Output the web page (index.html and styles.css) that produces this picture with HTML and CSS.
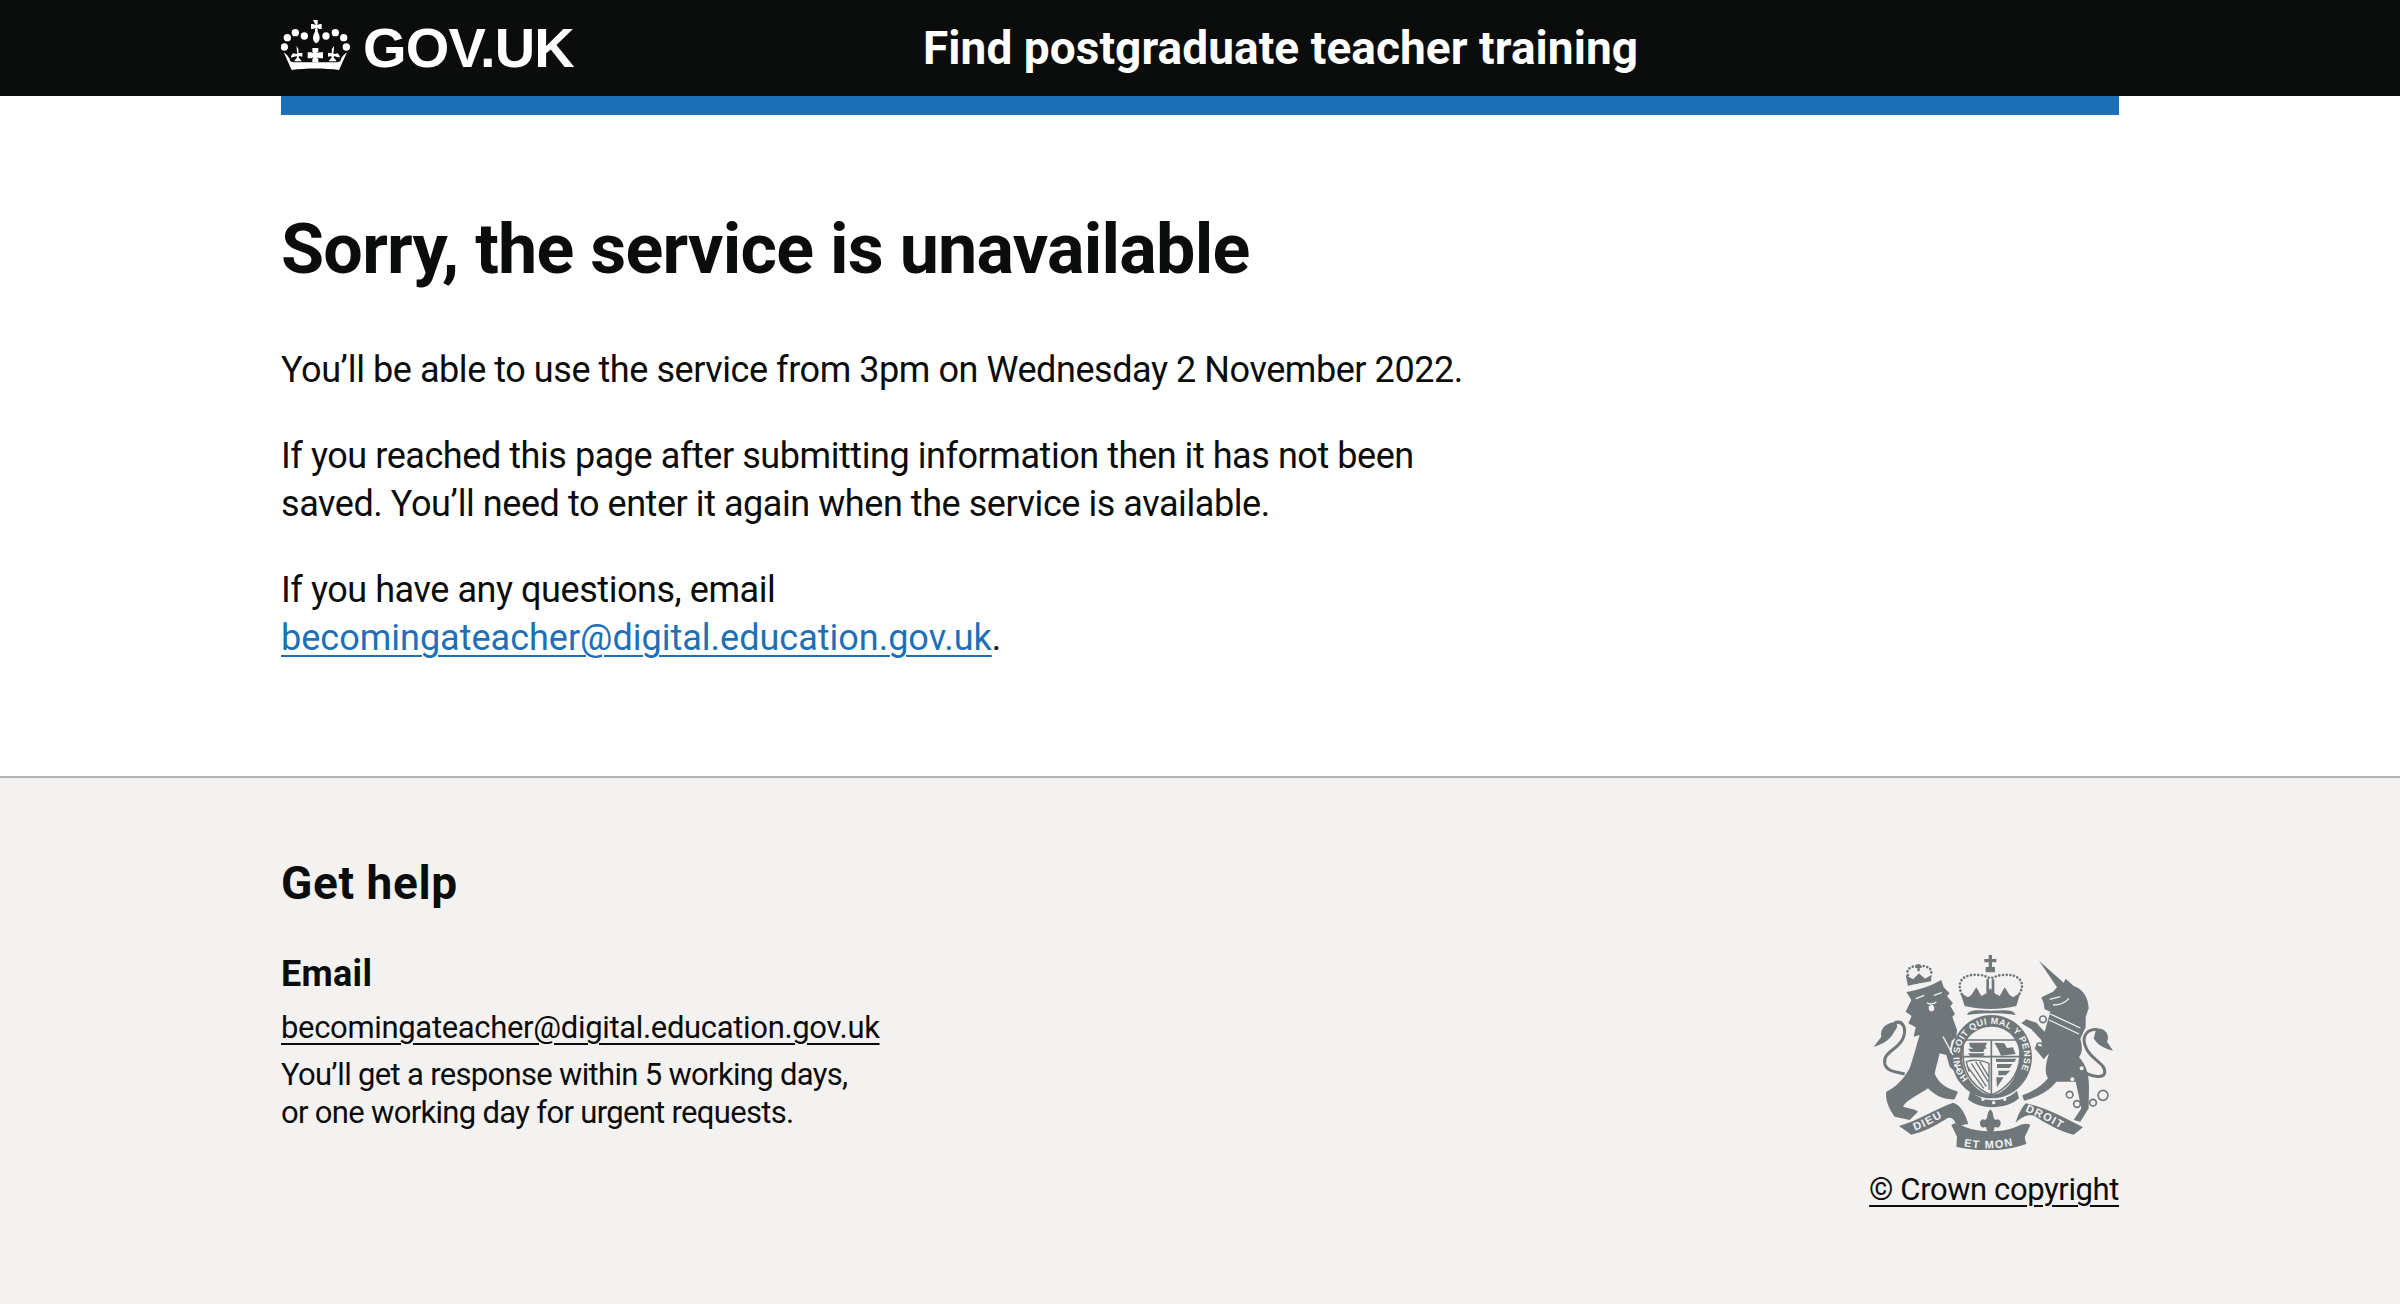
FILE: index.html
```html
<!DOCTYPE html>
<html lang="en">
<head>
<meta charset="utf-8">
<title>Sorry, the service is unavailable</title>
<link rel="stylesheet" href="styles.css">
</head>
<body>
<header class="header">
  <div class="wrap header-row">
    <a class="logo" href="#">
      <svg class="crown" viewBox="18 15 207 150" aria-hidden="true">
        <g fill="#fff">
          <circle cx="28" cy="96" r="11"/><circle cx="37" cy="68" r="11"/><circle cx="61" cy="53" r="11"/><circle cx="88" cy="63" r="11"/>
          <circle cx="153" cy="63" r="11"/><circle cx="181" cy="53" r="11"/><circle cx="206" cy="68" r="11"/><circle cx="214" cy="96" r="11"/>
          <path d="M114 15h14v11l-3 4 10-3h5v15h-5l-10-3 3 4v7c9 15 8 28-4 35-12-7-13-20-4-35v-7l3-4-10 3h-5V27h5l10 3-3-4z"/>
          <path d="M65 93c5 7 7 12 5 18l2 4 10-2v12l-10-2-1 5c4 4 7 7 9 11H57c2-4 5-7 9-11l-1-5-11 4-3-1c-2 5-3 2-3-3l6-8 11 2 2-4c-2-6-2-13-2-20z"/>
          <path d="M177 93c0 7 0 14-2 20l2 4 11-2 6 8c0 5-1 8-3 3l-3 1-11-4-1 5c4 4 7 7 9 11h-24c2-4 5-7 9-11l-1-5-10 2v-12l10 2 2-4c-2-6 0-11 6-18z"/>
          <path d="M112 99h18v11l-4 5 8-3h10v18h-10l-8-3 4 5v10h-18v-10l4-5-8 3H98v-18h10l8 3-4-5z"/>
          <path d="M50 165 26 112l10 8 8 11 2 8 9 3h132l9-3 2-8 8-11 10-8-24 53c-40-6-102-6-142 0z"/>
        </g>
      </svg>
      <span class="logo-text">GOV.UK</span>
    </a>
    <a class="service" href="#">Find postgraduate teacher training</a>
  </div>
</header>
<div class="wrap"><div class="blue-bar"></div></div>
<main class="wrap main">
  <h1 class="title">Sorry, the service is unavailable</h1>
  <p class="body-text">You’ll be able to use the service from 3pm on Wednesday 2 November 2022.</p>
  <p class="body-text">If you reached this page after submitting information then it has not been<br>saved. You’ll need to enter it again when the service is available.</p>
  <p class="body-text">If you have any questions, email<br><a class="link" href="#">becomingateacher@digital.education.gov.uk</a>.</p>
</main>
<footer class="footer">
  <div class="wrap footer-row">
    <div class="help">
      <h2 class="help-title">Get help</h2>
      <h3 class="help-sub">Email</h3>
      <p class="help-line"><a class="foot-link" href="#">becomingateacher@digital.education.gov.uk</a></p>
      <p class="help-line help-note">You’ll get a response within 5 working days,<br>or one working day for urgent requests.</p>
    </div>
    <div class="copy">
      <svg class="arms" viewBox="100 45 720 585" aria-hidden="true">
        <defs>
          <path id="ring" d="M386 416A97 97 0 1 1 526 416"/>
          <path id="dieu" d="M226 572C265 558 300 535 350 510"/>
          <path id="etmon" d="M360 616C420 630 490 630 565 604"/>
          <path id="droit" d="M556 514C600 530 650 556 700 590"/>
        </defs>
        <g class="ink">
          <!-- lion -->
          <path d="M200 156C235 150 270 140 305 120L312 142 330 160 322 168 340 190 332 198 346 222 338 230 352 270 350 292 336 302 330 335 362 372 347 396 330 380 320 345 300 340 285 400C295 430 320 445 355 455L345 478C310 480 285 465 265 445C245 460 200 480 190 500C205 505 225 505 235 515L210 540 165 530C150 510 135 480 140 455C160 445 185 430 210 385C225 340 232 310 240 285L222 290 228 262 206 250 216 228 198 215 215 180Z"/>
          <path d="M168 246C135 248 120 270 125 290L102 320C125 315 150 300 160 282C165 270 180 262 168 246Z"/>
          <path class="line" stroke-width="9" d="M165 248C190 240 202 265 190 295C175 330 130 335 135 370C140 395 170 395 195 402"/>
          <path d="M205 138 198 105 220 118 238 100 256 116 276 104 274 124C255 128 225 132 205 138Z"/>
          <path class="dots" d="M205 105C195 85 225 75 238 78C255 75 285 85 272 105"/>
          <path d="M233 72h7v6h6v6h-6v10h-7V84h-6v-6h6z"/>
          <!-- unicorn -->
          <path d="M598 62 672 128 678 116 702 138C728 145 746 172 747 205L738 232 738 262 722 296C728 320 730 335 718 352C735 370 748 395 748 440L747 505 722 545 702 540 725 505 716 462 708 425 650 425C630 450 600 470 553 482L548 466C575 456 605 440 625 415C612 395 620 365 628 340L612 358 585 325 590 315 608 320 605 300 575 268 545 250 560 238 590 248 602 262 615 275 632 215 615 208 612 190 605 172 640 155 652 142Z"/>
          <path d="M770 266C795 262 812 285 802 305L820 332C800 328 775 318 762 295Z"/>
          <path class="line" stroke-width="9" d="M772 268C735 268 725 295 740 325C755 360 800 370 795 400C790 415 760 410 740 400"/>
          <circle class="ring-line" cx="610" cy="238" r="10"/>
          <circle class="ring-line" cx="600" cy="318" r="9"/>
          <circle class="ring-line" cx="690" cy="464" r="10"/>
          <circle class="ring-line" cx="712" cy="492" r="10"/>
          <circle class="ring-line" cx="760" cy="488" r="10"/>
          <circle class="ring-line" cx="790" cy="466" r="15"/>
          <!-- crest crown -->
          <path d="M447 45h10v12h13v10h-13v14h9v16h-28V81h9V67h-13V57h13zM440 118h8v40h-8zM456 118h8v40h-8z"/>
          <path class="dots" d="M372 172C345 130 365 100 420 105C435 105 440 112 452 115C465 112 475 105 490 105C540 100 565 130 532 172"/>
          <path d="M375 198 362 158 385 172 395 165 410 142 425 168 440 160 452 145 465 160 480 168 495 142 510 165 520 172 542 158 530 198C480 210 425 210 375 198Z"/>
          <path d="M382 225C390 205 420 212 455 212S520 205 528 225C490 218 425 218 382 225Z"/>
          <!-- garter -->
          <path fill-rule="evenodd" d="M456 225C525 225 577 282 577 350S525 475 456 475 335 418 335 350 387 225 456 225ZM456 260C408 260 367 298 367 350S408 460 456 465C504 460 540 402 540 350S504 260 456 260Z"/>
          <path d="M392 452C430 490 490 490 532 452L538 475C500 510 420 510 385 478Z"/>
          <!-- fleur -->
          <path d="M452 508C466 522 456 534 468 540C480 530 492 555 474 563C464 558 464 562 463 570L452 585 441 570C440 562 440 558 430 563C412 555 424 530 436 540C448 534 438 522 452 508Z"/>
          <!-- ribbons -->
          <path d="M178 558C240 540 290 505 340 488C365 495 378 525 386 552L350 558C345 535 332 528 318 538C285 558 250 578 215 584Z"/>
          <path d="M335 555C345 545 362 552 378 562C420 578 490 578 530 560 548 552 562 548 572 555L555 592 560 612C490 636 420 636 350 620L352 590Z"/>
          <path d="M528 548C534 525 545 505 558 490 610 500 670 530 730 562L702 584C660 575 610 545 585 528 565 522 548 530 528 548Z"/>
        </g>
        <!-- shield -->
        <path class="shield-line" d="M370 300H455V465C415 450 372 410 370 350ZM455 300H541V350C538 410 495 450 455 465M370 350H541"/>
        <g class="ink">
          <path d="M388 308h55l-6 10 4 8h-40l-10-6zM385 326h50l-4 10h-38zM385 340h50l-4 8h-40zM464 308l30 2 8 14 18-2 8 20-44 5-8-18zM468 356h62l-6 10h-54zM472 372h46l-8 12h-38zM476 392h36l-14 14h-22zM470 412h22l-20 30z"/>
        </g>
        <path class="harp" d="M395 370 440 440M408 365 445 425M382 378 432 445M420 365 447 410M388 395 380 365C410 355 430 362 448 370V450"/>
        <g class="arms-text">
          <text class="motto"><textPath href="#ring">HONI SOIT QUI MAL Y PENSE</textPath></text>
          <text class="scroll"><textPath href="#dieu">DIEU</textPath></text>
          <text class="scroll"><textPath href="#etmon" startOffset="6%">ET MON</textPath></text>
          <text class="scroll"><textPath href="#droit">DROIT</textPath></text>
        </g>
        <path class="cut" d="M228 176 254 166M282 166 306 158M262 188C268 195 282 192 290 186M310 290 340 345M345 372 360 395M630 178 662 170M640 195C660 195 675 190 688 175M632 222 722 264M628 240 718 282"/>
        <g class="paper">
          <path d="M268 198C264 210 272 218 282 212 286 205 282 196 278 194Z"/>
          <circle cx="430" cy="478" r="5"/><circle cx="462" cy="488" r="5"/><circle cx="495" cy="478" r="5"/>
          <circle cx="726" cy="385" r="6"/><circle cx="698" cy="418" r="6"/>
        </g>
      </svg>
      <a class="foot-link copy-link" href="#">© Crown copyright</a>
    </div>
  </div>
</footer>
</body>
</html>
```
FILE: styles.css
```css
* { box-sizing: border-box; }
html, body { height: 100%; }
body {
  margin: 0;
  display: flex;
  flex-direction: column;
  font-family: "Roboto", "Liberation Sans", sans-serif;
  color: #0b0c0c;
  background: #fff;
}
.wrap { width: 1838px; margin: 0 auto; }
.header { background: #0b0c0c; height: 96px; flex: none; }
.header-row { display: flex; align-items: center; height: 96px; }
.logo { display: flex; align-items: center; color: #fff; text-decoration: none; width: 642px; flex: none; }
.crown { width: 69px; height: 50px; display: block; margin-bottom: 6px; }
.logo-text {
  font-family: "Liberation Sans", Arial, sans-serif;
  font-weight: 700;
  font-size: 56px;
  line-height: 96px;
  margin-left: 13px;
  letter-spacing: -.8px;
}
.service {
  color: #fff;
  text-decoration: none;
  font-weight: 700;
  font-size: 46px;
  line-height: 96px;
  letter-spacing: .06px;
}
.blue-bar { height: 19px; background: #1d70b8; }
.main { padding: 86px 0 114px; flex: none; }
.title { margin: 0 0 48px; font-size: 70px; line-height: 96px; font-weight: 700; letter-spacing: -.74px; }
.body-text { margin: 0 0 38px; padding-top: 1px; font-size: 36px; line-height: 48px; letter-spacing: -.44px; white-space: nowrap; }
.body-text + .body-text { margin-top: -1px; }
.body-text:last-child { margin-bottom: 0; }
.link { color: #1d70b8; letter-spacing: 0; text-decoration-thickness: 2px; text-underline-offset: 5px; }
.footer { flex: 1; background: #f3f2f1; border-top: 2px solid #b1b4b6; padding-top: 76px; }
.footer-row { display: flex; justify-content: space-between; align-items: flex-start; }
.help-title { margin: 0 0 38px; font-size: 46px; line-height: 58px; font-weight: 700; letter-spacing: .6px; }
.help-sub { margin: 0 0 11px; font-size: 36px; line-height: 48px; font-weight: 700; letter-spacing: .3px; }
.help-line { margin: 0 0 9px; font-size: 31px; line-height: 38px; white-space: nowrap; }
.help-note { margin: 0; letter-spacing: -.68px; }
.foot-link { color: #0b0c0c; letter-spacing: -.33px; text-decoration-thickness: 2px; text-underline-offset: 5px; }
.copy { display: flex; flex-direction: column; align-items: flex-end; margin-top: 101px; }
.arms { width: 240px; height: 195px; display: block; margin: 0 6px 21px 0; }
.copy-link { font-size: 31px; line-height: 38px; letter-spacing: -.4px; white-space: nowrap; }
.ink { fill: #6f777b; }
.line { fill: none; stroke: #6f777b; }
.dots { fill: none; stroke: #6f777b; stroke-width: 8; stroke-linecap: round; stroke-dasharray: 0 11; }
.ring-line { fill: none; stroke: #6f777b; stroke-width: 5; }
.shield-line { fill: none; stroke: #6f777b; stroke-width: 5; }
.harp { fill: none; stroke: #6f777b; stroke-width: 4; }
.cut { fill: none; stroke: #f3f2f1; stroke-width: 4; }
.paper { fill: #f3f2f1; }
.arms-text text { fill: #f3f2f1; font-family: "Liberation Sans", sans-serif; font-weight: 700; }
.motto { font-size: 27px; letter-spacing: 1.5px; }
.scroll { font-size: 33px; letter-spacing: 4px; }
```
